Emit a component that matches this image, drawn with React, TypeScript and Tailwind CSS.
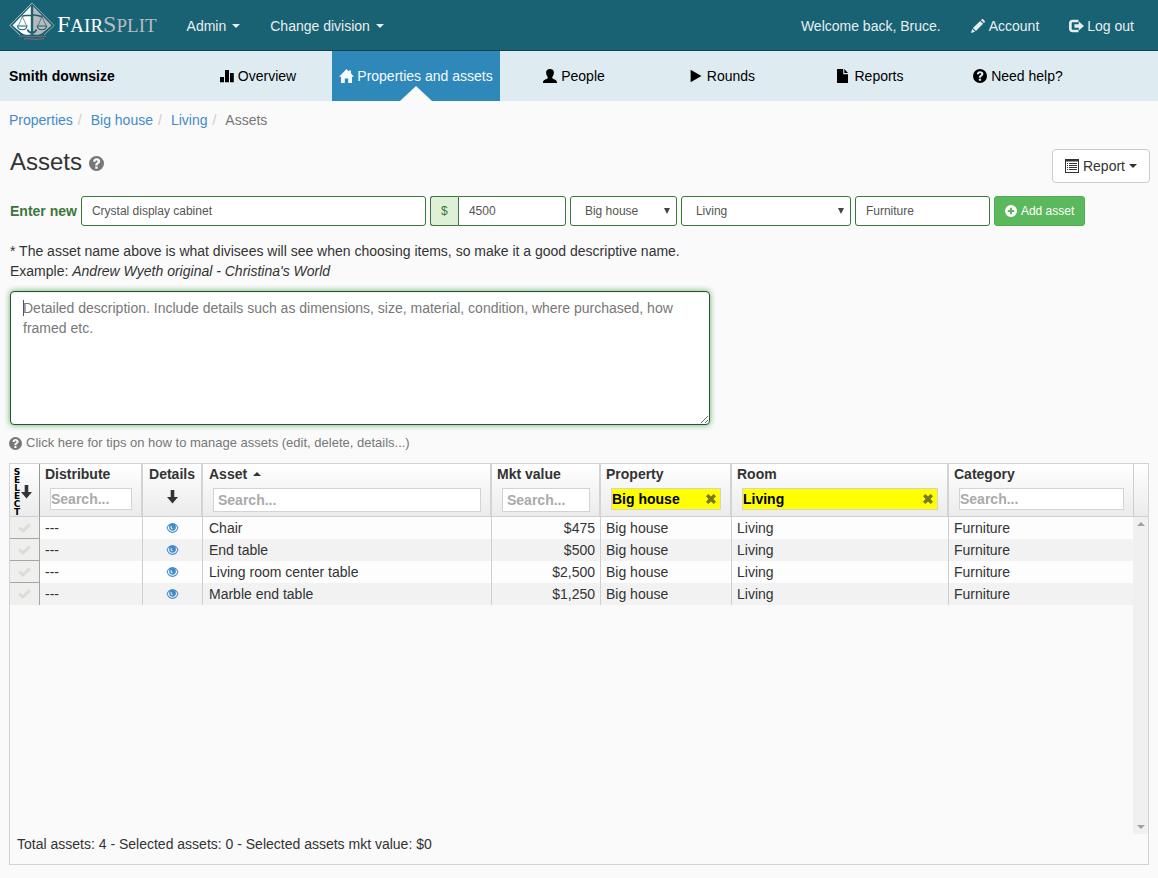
import React from "react";

type IconProps = { className?: string };

function Svg({ className = "size-3.5", box = "0 0 14 14", children }: IconProps & { box?: string; children: React.ReactNode }) {
  return (
    <svg aria-hidden="true" viewBox={box} fill="currentColor" className={`shrink-0 ${className}`}>
      {children}
    </svg>
  );
}

const StatsIcon = () => (
  <Svg>
    <path d="M0 8h4v5.200H0zM5 1h4v12.200H5zM10 4h3.800v9.200H10z" />
  </Svg>
);
const HomeIcon = () => (
  <Svg className="h-3.5 w-[15px]" box="0 0 15 14">
    <path d="M7.500 0 10 2.600V1.400h2v3.200L15 7.800h-2V14H9.200V9.600H5.800V14H2V7.800H0z" />
  </Svg>
);
const UserIcon = () => (
  <Svg>
    <path d="M7 0C9.600 0 11 1.500 10.900 3.800 10.800 5.800 10.100 7 9.300 7.900V9.300C10.300 10.200 14 10.700 14 13.400V14H0V13.400C0 10.700 3.700 10.200 4.700 9.300V7.900C3.900 7 3.200 5.800 3.100 3.800 3 1.500 4.400 0 7 0z" />
  </Svg>
);
const PlayIcon = () => (
  <Svg>
    <path d="M1.600 .8 12.500 7 1.600 13.200z" />
  </Svg>
);
const FileIcon = () => (
  <Svg>
    <path d="M1 0h6.200v5.200H12V14H1zM8.300 0 12 4.100H8.300z" />
  </Svg>
);
const HelpIcon = ({ className }: IconProps) => (
  <Svg className={className}>
    <path
      fillRule="evenodd"
      d="M7 0a7 7 0 1 1 0 14A7 7 0 0 1 7 0zM5.800 9.700v2.100h2.300V9.700zM3.900 5.300h2.300c0-.8.2-1.200.9-1.200.6 0 1 .3 1 .8 0 .6-.4.8-1 1.300C6.200 6.800 5.800 7.400 5.800 8.800h2.200c0-.8.3-1 1-1.500.8-.6 1.400-1.300 1.400-2.500C10.400 3.200 9 2.200 7.100 2.200 5.100 2.200 3.900 3.400 3.900 5.300z"
    />
  </Svg>
);
const PlusIcon = () => (
  <Svg className="size-3">
    <path fillRule="evenodd" d="M7 0a7 7 0 1 1 0 14A7 7 0 0 1 7 0zM5.800 3.200v2.600H3.200v2.400h2.600v2.600h2.400V8.200h2.600V5.800H8.200V3.200z" />
  </Svg>
);
const PencilIcon = () => (
  <Svg>
    <path d="M0 14 1.200 9.900 4.100 12.800zM1.900 9.100 9.200 1.900l2.900 2.900-7.200 7.300zM10 1.100l.8-.8c.4-.4.9-.4 1.300 0l1.600 1.600c.4.4.4.9 0 1.300l-.8.8z" />
  </Svg>
);
const LogoutIcon = () => (
  <Svg className="h-3.5 w-[15px]" box="0 0 15 14">
    <path d="M9.500 .8v2.400H4c-1 0-1.300.4-1.300 1.400v4.800c0 1 .3 1.400 1.300 1.400h5.500v2.400H3.700C1.300 13.200 0 11.900 0 9.500v-5C0 2.100 1.300.8 3.700.8zM9.800 2.500 15 7l-5.200 4.500V8.800H5.400V5.200h4.400z" />
  </Svg>
);
const ListIcon = () => (
  <Svg>
    <path fillRule="evenodd" d="M0 0h14v14H0zM1 2.500V13h12V2.500z" />
    <path d="M2 4h1v1H2zM2 6h1v1H2zM2 8h1v1H2zM2 10h1v1H2zM4 4h8v1H4zM4 6h8v1H4zM4 8h8v1H4zM4 10h8v1H4z" />
  </Svg>
);
const DownIcon = () => (
  <Svg className="h-[14px] w-[11px]" box="0 0 11 14">
    <path d="M3.700 0h3.600v7H11L5.500 13.500 0 7h3.700z" />
  </Svg>
);
const EyeIcon = () => (
  <Svg className="h-2.5 w-[13px]" box="0 0 12 10">
    <path
      fillRule="evenodd"
      d="M6 0C9 0 11 2.200 12 4.800 11 7.600 9 10 6 10S1 7.600 0 4.800C1 2.200 3 0 6 0zM3.200 1.900C2.200 2.600 1.500 3.600 1.100 4.900 2 7.200 3.800 8.800 6 8.800s4-1.600 4.900-3.900C10.500 3.600 9.800 2.600 8.800 1.900 9.200 2.600 9.400 3.300 9.400 4.200 9.400 6.200 8 7.700 6 7.700S2.600 6.200 2.600 4.200c0-.9.2-1.600.6-2.300zM4.200 3.200c-.4 1.600.4 2.900 1.800 3.100.4-.4.2-.8-.2-1C5 4.900 4.900 4 5.300 3.100z"
    />
  </Svg>
);
const CheckIcon = () => (
  <Svg className="h-[10px] w-[13px]" box="0 0 13 10">
    <path d="M0 5.600 2.300 3.400 5 6 10.700.3 12.900 2.400 5 10z" />
  </Svg>
);
const CloseIcon = () => (
  <Svg className="size-2.5" box="0 0 10 10">
    <path d="M2.300 0 5 2.600 7.700 0 10 2.300 7.400 5 10 7.700 7.700 10 5 7.400 2.300 10 0 7.700 2.600 5 0 2.300z" />
  </Svg>
);
const Caret = () => (
  <Svg className="h-1 w-2" box="0 0 8 4">
    <path d="M0 0h8L4 4z" />
  </Svg>
);
const CaretUp = () => (
  <Svg className="h-1 w-2" box="0 0 8 4">
    <path d="M0 4h8L4 0z" />
  </Svg>
);

function LogoMark() {
  return (
    <svg aria-hidden="true" viewBox="0 0 46 38" className="h-[38px] w-[46px] shrink-0" fill="none">
      <path d="M11 33 .8 23.500 23 1" stroke="#a9c3c9" strokeWidth="1" />
      <path d="M35 33 45.200 23.500 23 1" stroke="#94a9b0" strokeWidth="1" />
      <path d="M22.500 3.500V32c-3.500 1.500-7.500 1-10.500-1.500L3.500 23.500z" fill="#fff" />
      <path d="M23.500 3.500V32c3.500 1.500 7.500 1 10.500-1.500L42.500 23.500z" fill="#b9b9bd" />
      <g stroke="#186273">
        <path d="M23 4v26" strokeWidth="2.400" />
        <path d="M13 14.500C16 12.300 19 14.500 23 13.200s7 1.300 10.500 1.300" strokeWidth="1.500" />
        <path d="M13.300 14.500 9.500 23.500M13.300 14.500 17.500 23.500M33 14.500 29 23.500M33 14.500 37 23.500" strokeWidth=".7" />
        <path d="M8.500 24h9.500c-.3 2.400-2 3.800-4.700 3.800S8.800 26.400 8.500 24zM28.200 24h9.500c-.3 2.400-2 3.800-4.700 3.800s-4.500-1.400-4.800-3.800z" strokeWidth="1.100" />
        <path d="M18.500 27.500c1 2.500 2.800 3.500 4.500 3.500s3.500-1 4.500-3.500" strokeWidth="1.800" />
      </g>
      <path d="M10 34.500c6-1.500 10 .8 15 .3s8-.8 12-.3M15 37c5-1.200 8 .6 12 .2s5-.7 8-.4" stroke="#7d6f75" strokeWidth="1.100" />
    </svg>
  );
}

const navItems = [
  { label: "Overview", icon: <StatsIcon />, active: false },
  { label: "Properties and assets", icon: <HomeIcon />, active: true },
  { label: "People", icon: <UserIcon />, active: false },
  { label: "Rounds", icon: <PlayIcon />, active: false },
  { label: "Reports", icon: <FileIcon />, active: false },
  { label: "Need help?", icon: <HelpIcon />, active: false },
];

const rows = [
  { asset: "Chair", value: "$475" },
  { asset: "End table", value: "$500" },
  { asset: "Living room center table", value: "$2,500" },
  { asset: "Marble end table", value: "$1,250" },
];

const field = "h-[30px] border border-[#3c763d] bg-white text-xs text-[#555] outline-none";

function Select({ label, value, className }: { label: string; value: string; className: string }) {
  return (
    <div className={`grid items-center ${className}`}>
      <select aria-label={label} className={`${field} col-start-1 row-start-1 w-full appearance-none rounded-[3px] pl-3.5 pr-5`}>
        <option>{value}</option>
      </select>
      <svg aria-hidden="true" viewBox="0 0 6 6" className="pointer-events-none col-start-1 row-start-1 mr-[7px] size-1.5 justify-self-end fill-[#444]">
        <path d="M0 0h6L3 6z" />
      </svg>
    </div>
  );
}

type HeadCellProps = { title: string; filter?: string; tall?: boolean; sorted?: boolean; last?: boolean };

function HeadCell({ title, filter, tall, sorted, last }: HeadCellProps) {
  return (
    <th scope="col" className={`border-b border-r-[#d3d3d3] border-b-[#cfcfcf] p-0 text-left align-top ${last ? "" : "border-r-2"}`}>
      <div className={`flex h-5 items-center gap-1.5 whitespace-nowrap ${sorted ? "pl-1.5" : "pl-[5px]"}`}>
        {title}
        {sorted && <CaretUp />}
      </div>
      <div
        className={`mt-1 mr-[9px] ml-2.5 flex items-center border border-[#d3d3d3] ${tall ? "h-6 px-1" : "h-[22px]"} ${filter ? "bg-[#ff0]" : "bg-white"}`}
      >
        <input
          aria-label={`Search ${title}`}
          placeholder="Search..."
          defaultValue={filter}
          className="w-full min-w-0 flex-1 bg-transparent font-bold text-black outline-none placeholder:text-[#aaa]"
        />
        {filter && (
          <button type="button" aria-label={`Clear ${title}`} className="mr-1 text-[#77771e]">
            <CloseIcon />
          </button>
        )}
      </div>
    </th>
  );
}

export default function App() {
  return (
    <div className="min-h-screen bg-[#fafafa] font-['Liberation_Sans',Arial,sans-serif] text-sm leading-5 text-[#333]">
      <header className="flex h-[51px] items-center gap-[30px] border-b border-[#0f4350] bg-[#186273] pt-0.5 pr-6 pl-[9px] text-[#e8eef0]">
        <a href="#home" aria-label="FairSplit" className="flex h-11 items-start gap-0.5 self-start">
          <LogoMark />
          <span className="mt-1.5 font-['Liberation_Serif',serif] text-[19px] leading-6 text-white">
            <span className="text-2xl">F</span>AIR
            <span className="text-[#b9bcc0]">
              <span className="text-2xl">S</span>PLIT
            </span>
          </span>
        </a>
        <button type="button" className="flex items-center gap-1.5">
          Admin <Caret />
        </button>
        <button type="button" className="flex items-center gap-1.5">
          Change division <Caret />
        </button>
        <span className="ml-auto">Welcome back, Bruce.</span>
        <a href="#account" className="flex items-center gap-1">
          <PencilIcon /> Account
        </a>
        <a href="#logout" className="flex items-center gap-[3px]">
          <LogoutIcon /> Log out
        </a>
      </header>

      <nav className="grid h-[50px] grid-cols-[184fr_148fr_168fr_148fr_148fr_148fr_148fr_66fr] items-center bg-[#deecf1] text-black">
        <strong className="pl-[9px]">Smith downsize</strong>
        {navItems.map((item) => (
          <a
            key={item.label}
            href="#nav"
            aria-current={item.active ? "page" : undefined}
            className={`relative flex h-full items-center justify-center whitespace-nowrap ${item.active ? "gap-[3px] bg-[#2e88b9] text-[#f5fafc]" : "gap-1"}`}
          >
            {item.icon}
            {item.label}
            {item.active && (
              <svg aria-hidden="true" viewBox="0 0 32 15" className="absolute bottom-0 left-1/2 h-[15px] w-8 -translate-x-1/2 fill-[#fafafa]">
                <path d="M16 0 32 15H0z" />
              </svg>
            )}
          </a>
        ))}
      </nav>

      <main className="px-[9px] pt-[9px] pb-3">
        <ol className="flex">
          {["Properties", "Big house", "Living"].map((crumb) => (
            <li key={crumb} className="flex">
              <a href="#crumb" className="text-[#428bca]">
                {crumb}
              </a>
              <span className="pr-[9px] pl-[5px] text-[#ccc]">/</span>
            </li>
          ))}
          <li className="text-[#777]">Assets</li>
        </ol>

        <div className="mt-[19px] flex h-[34px] items-start justify-between">
          <h1 className="flex items-center gap-[7px] pl-px text-2xl leading-[26px] text-[#333]">
            Assets
            <HelpIcon className="mt-0.5 size-[15px] text-[#777]" />
          </h1>
          <button type="button" className="-mr-px flex h-[34px] items-center gap-1 rounded border border-[#ccc] bg-white px-3">
            <ListIcon /> Report <Caret />
          </button>
        </div>

        <form className="pl-px">
          <div className="mt-[13px] flex items-center gap-1">
            <label htmlFor="asset-name" className="font-bold whitespace-nowrap text-[#3c763d]">
              Enter new
            </label>
            <input id="asset-name" defaultValue="Crystal display cabinet" className={`${field} w-[345px] rounded-[3px] px-2.5`} />
            <div className="flex w-[136px]">
              <label
                htmlFor="asset-value"
                className="flex h-[30px] w-7 shrink-0 items-center justify-center rounded-l-[3px] border border-r-0 border-[#3c763d] bg-[#dff0d8] text-xs text-[#3c763d]"
              >
                $
              </label>
              <input id="asset-value" defaultValue="4500" className={`${field} w-full min-w-0 rounded-r-[3px] px-2.5`} />
            </div>
            <Select label="Property" value="Big house" className="w-[107px]" />
            <Select label="Room" value="Living" className="w-[170px]" />
            <input aria-label="Category" defaultValue="Furniture" className={`${field} w-[135px] rounded-[3px] px-2.5`} />
            <button
              type="button"
              className="flex h-[30px] items-center gap-1 rounded-[3px] border border-[#4cae4c] bg-[#5cb85c] px-2.5 text-xs whitespace-nowrap text-white"
            >
              <PlusIcon /> Add asset
            </button>
          </div>

          <p className="mt-[15px]">
            * The asset name above is what divisees will see when choosing items, so make it a good descriptive name.
            <br />
            Example: <em>Andrew Wyeth original - Christina's World</em>
          </p>

          <div className="relative mt-2.5 flex w-[700px] max-w-full">
            <textarea
              aria-label="Detailed description"
              placeholder="Detailed description. Include details such as dimensions, size, material, condition, where purchased, how framed etc."
              className="h-[134px] w-full rounded border border-[#2b542c] bg-white px-3 py-1.5 shadow-[inset_0_1px_1px_rgba(0,0,0,0.075),0_0_6px_#67b168] outline-none placeholder:text-[#777]"
            />
            <span aria-hidden="true" className="absolute top-[9px] left-[13px] h-4 w-px bg-[#555]" />
          </div>
        </form>

        <a href="#tips" className="mt-2 flex items-center gap-1 text-[13px] text-[#777]">
          <HelpIcon className="size-[13px]" />
          Click here for tips on how to manage assets (edit, delete, details...)
        </a>

        <section className="mt-2.5 border border-[#d3d3d3]">
          <table className="w-full table-fixed border-separate border-spacing-0">
            <colgroup>
              <col className="w-[30px]" />
              <col className="w-[103px]" />
              <col className="w-[60px]" />
              <col />
              <col className="w-[109px]" />
              <col className="w-[131px]" />
              <col className="w-[217px]" />
              <col className="w-[184px]" />
              <col className="w-[15px]" />
            </colgroup>
            <thead>
              <tr className="h-[53px] bg-linear-to-b from-white to-[#ebebeb]">
                <th scope="col" aria-label="Select" className="border-r border-b border-r-[#999] border-b-[#cfcfcf] p-0 align-top">
                  <div className="flex items-center pt-1 pl-[3px]">
                    <span className="flex w-2 flex-col items-center font-['DejaVu_Sans',sans-serif] text-[9px] leading-2 text-black">
                      {["S", "E", "L", "E", "C", "T"].map((letter, i) => (
                        <span key={i}>{letter}</span>
                      ))}
                    </span>
                    <DownIcon />
                  </div>
                </th>
                <HeadCell title="Distribute" />
                <th scope="col" className="border-r-2 border-b border-r-[#d3d3d3] border-b-[#cfcfcf] p-0 align-top">
                  <div className="flex flex-col items-center gap-1.5">
                    Details
                    <DownIcon />
                  </div>
                </th>
                <HeadCell title="Asset" tall sorted />
                <HeadCell title="Mkt value" tall />
                <HeadCell title="Property" filter="Big house" />
                <HeadCell title="Room" filter="Living" />
                <HeadCell title="Category" last />
                <td className="border-b border-l border-[#cfcfcf] p-0" />
              </tr>
            </thead>
            <tbody>
              {rows.map((row, i) => (
                <tr
                  key={row.asset}
                  className="h-[22px] odd:bg-[#fdfdfd] even:bg-[#f2f2f2] [&>td]:border-r [&>td]:border-[#cfcfcf] [&>td]:py-0 [&>td]:leading-5 [&>td]:whitespace-nowrap"
                >
                  <td className={`bg-[#efefee] px-0 ${i < rows.length - 1 ? "border-b" : ""} border-[#a5a5a5]!`}>
                    <label className="flex justify-center text-[#dcdcdc]">
                      <input type="checkbox" aria-label={`Select ${row.asset}`} className="sr-only" />
                      <CheckIcon />
                    </label>
                  </td>
                  <td className="px-[5px]">---</td>
                  <td>
                    <button type="button" aria-label={`Details of ${row.asset}`} className="mx-auto flex text-[#428bca]">
                      <EyeIcon />
                    </button>
                  </td>
                  <td className="px-1.5">{row.asset}</td>
                  <td className="px-[5px] text-right">{row.value}</td>
                  <td className="px-[5px]">Big house</td>
                  <td className="px-[5px]">Living</td>
                  <td className="border-r-0! px-[5px]">Furniture</td>
                  {i === 0 && (
                    <td rowSpan={rows.length + 1} className="border-r-0! bg-[#f0f0f0] p-0">
                      <div className="flex h-[317px] flex-col items-center justify-between py-[5px] text-[#a0a0a0]">
                        <CaretUp />
                        <Caret />
                      </div>
                    </td>
                  )}
                </tr>
              ))}
              <tr className="h-[229px]">
                <td colSpan={8} />
              </tr>
            </tbody>
          </table>
          <p className="px-[7px] pb-2.5">Total assets: 4 - Selected assets: 0 - Selected assets mkt value: $0</p>
        </section>
      </main>
    </div>
  );
}
